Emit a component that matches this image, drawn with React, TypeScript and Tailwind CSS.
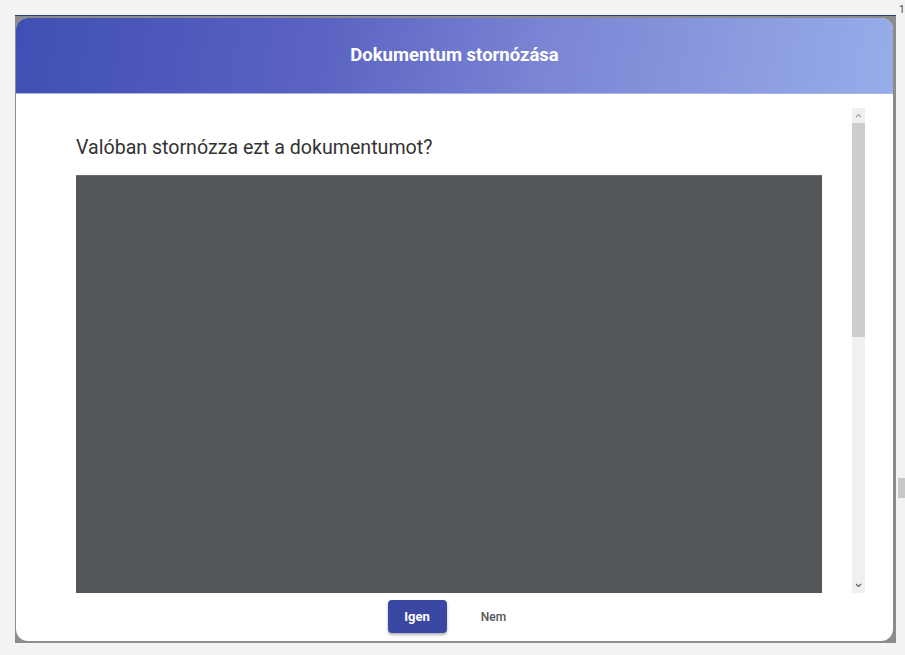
import React from "react";

export default function App() {
  return (
    <div className="relative h-[655px] w-[905px] overflow-hidden bg-[#f3f3f3] font-['Roboto',sans-serif]">
      {/* page fragments peeking out on the right */}
      <span className="absolute left-[899px] top-[2px] text-[10px] text-[#444]">1</span>
      <div className="absolute left-[898px] top-[478px] h-[20px] w-[7px] bg-[#c8c8c8]" />

      {/* dimmed backdrop of the page behind */}
      <div className="ml-[15px] mt-[15px] h-[628px] w-[881px] border-t border-[#2e3a86] bg-[#8c8c8c] pl-px pr-[3px] pt-[2px]">
        <div className="flex h-[623px] flex-col overflow-hidden rounded-xl bg-white">
          <div className="flex h-[76px] shrink-0 items-center justify-center border-b border-[#a9b5ea] bg-[linear-gradient(100deg,#3f4fb3_0%,#5b63c2_35%,#7a85d4_60%,#97ade9_100%)]">
            <h1 className="text-[18.5px] font-bold text-white">Dokumentum stornózása</h1>
          </div>

          <div className="flex min-h-0 flex-1 pt-[14px]">
            <div className="flex-1 pl-[60px] pr-[30px]">
              <p className="mt-[28px] text-[19.6px] leading-[24px] text-[#333]">Valóban stornózza ezt a dokumentumot?</p>
              <div className="mt-[15px] h-[418px] w-[746px] border-t border-[#6a6e71] bg-[#53575a]" />
            </div>
            <div className="mr-[28px] flex h-[485px] w-[13px] flex-col bg-[#f0f0f0]">
              <div className="flex h-[15px] items-center justify-center">
                <svg width="7" height="5" viewBox="0 0 7 5"><path d="M1 4 L3.5 1.5 L6 4" fill="none" stroke="#a3a3a3" strokeWidth="1.2" /></svg>
              </div>
              <div className="h-[214px] bg-[#cdcdcd]" />
              <div className="flex-1" />
              <div className="flex h-[15px] items-center justify-center">
                <svg width="7" height="5" viewBox="0 0 7 5"><path d="M1 1 L3.5 3.5 L6 1" fill="none" stroke="#606060" strokeWidth="1.2" /></svg>
              </div>
            </div>
          </div>

          <div className="flex h-[47px] shrink-0 items-start justify-center gap-[23px] pr-[4px] pt-[6px]">
            <button className="h-[33px] w-[59px] rounded-[4px] bg-[#3a47a3] text-[13px] font-bold text-white shadow-[0_2px_3px_rgba(0,0,0,0.3)]">Igen</button>
            <button className="h-[33px] w-[48px] text-[12px] font-medium text-[#555]">Nem</button>
          </div>
        </div>
      </div>
    </div>
  );
}
